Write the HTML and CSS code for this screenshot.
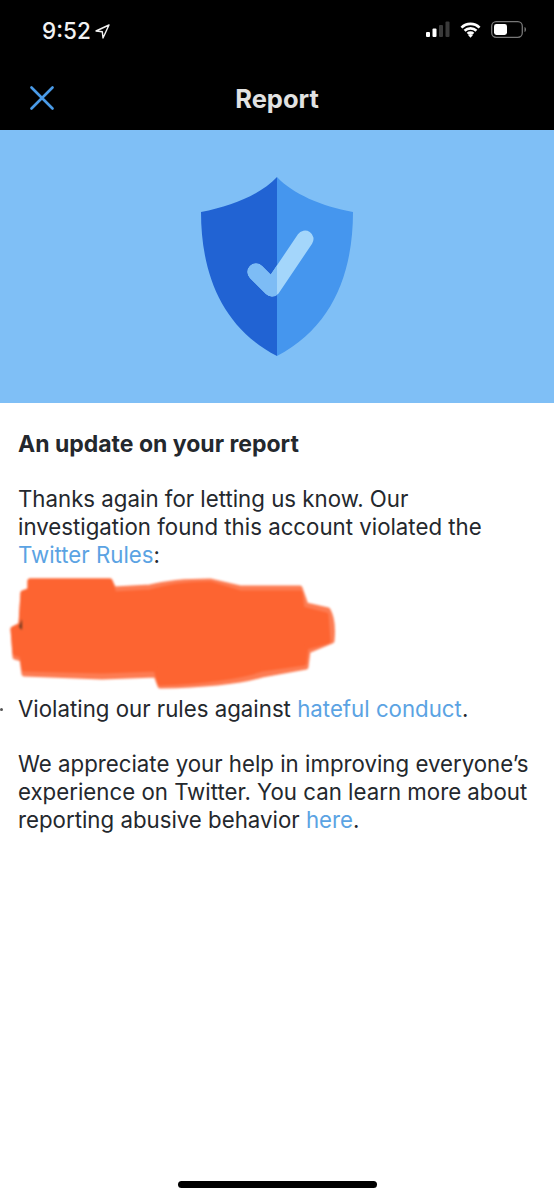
FILE: index.html
```html
<!DOCTYPE html>
<html lang="en">
<head>
<meta charset="utf-8">
<title>Report</title>
<link rel="stylesheet" href="styles.css">
</head>
<body>
<div class="phone">
  <header class="top">
    <div class="status">
      <div class="clock"><span>9:52</span>
        <svg class="loc" width="15" height="15" viewBox="0 0 15 15"><path d="M14 1 1 7 7.300 7.700 8 14Z" fill="none" stroke="#f2f2f2" stroke-width="1.400" stroke-linejoin="round"/></svg>
      </div>
      <div class="sys">
        <svg width="24" height="17" viewBox="0 0 24 17"><rect x="0" y="11" width="4" height="5" rx="1" fill="#fff"/><rect x="6.500" y="7.500" width="4" height="8.500" rx="1" fill="#fff"/><rect x="13" y="4" width="4" height="12" rx="1" fill="#3a3a3a"/><rect x="19.500" y="0.500" width="4" height="15.500" rx="1" fill="#3a3a3a"/></svg>
        <svg width="21" height="16" viewBox="0 0 22 16"><path d="M1.500 5.500a13.500 13.500 0 0 1 19 0M4.800 8.800a9 9 0 0 1 12.400 0M8 12a4.400 4.400 0 0 1 6 0" fill="none" stroke="#fff" stroke-width="2.800"/><path d="M11 16 8.600 13.400a3.400 3.400 0 0 1 4.800 0Z" fill="#fff"/></svg>
        <svg width="36" height="17" viewBox="0 0 36 17"><rect x="0.700" y="0.700" width="30.600" height="15.600" rx="4.500" fill="none" stroke="#777" stroke-width="1.300"/><rect x="3" y="3" width="13" height="11" rx="2.400" fill="#fff"/><path d="M33.500 6v5c1-.3 1.500-1.300 1.500-2.500s-.5-2.200-1.500-2.500Z" fill="#777"/></svg>
      </div>
    </div>
    <nav class="nav">
      <svg class="close" width="24" height="24" viewBox="0 0 24 24"><path d="M1.500 1.500 22.500 22.500M22.500 1.500 1.500 22.500" stroke="#4a9be8" stroke-width="2.600" stroke-linecap="round"/></svg>
      <h1 class="title">Report</h1>
    </nav>
  </header>
  <section class="banner">
    <svg width="152" height="180" viewBox="0 0 152 180">
      <defs><clipPath id="left-half"><rect x="0" y="0" width="76" height="180"/></clipPath></defs>
      <path d="M76 0C60 17 32 29 0 35C0 95 20 150 76 179Z" fill="#2163d3"/>
      <path d="M76 0C92 17 120 29 152 35C152 95 132 150 76 179Z" fill="#4596ee"/>
      <path d="M55 95 71 111 104 62" fill="none" stroke="#a4d6fb" stroke-width="17" stroke-linecap="round" stroke-linejoin="round"/>
      <path d="M55 95 71 111 104 62" fill="none" stroke="#7dbcf5" stroke-width="17" stroke-linecap="round" stroke-linejoin="round" clip-path="url(#left-half)"/>
    </svg>
  </section>
  <main class="body">
    <h2 class="heading">An update on your report</h2>
    <p class="para">Thanks again for letting us know. Our investigation found this account violated the <a class="link">Twitter Rules</a>:</p>
    <svg class="scribble" width="326" height="115" viewBox="0 0 326 115">
      <path d="M20 6H100L104 14 140 12C155 8 170 6 200 6L230 13H290L296 30 318 35Q324 45 322 66L298 76 296 92 252 100C235 105 205 110 150 111L146 100 92 102 14 99 12 84 5 82 3 54 11 50 13 18 20 15Z" fill="#fd7c52" stroke="#fd7c52" stroke-width="5" stroke-linejoin="round"/>
      <path d="M20 6H100L104 19 140 17C155 13 170 9 200 9L230 18H290L292 34 316 40 318 66 296 72 294 88 252 94C235 100 200 106 150 108L146 94 92 96 14 94 12 80 5 78 3 54 11 50 13 18 20 16Z" fill="#fd6431" stroke="#fd6431" stroke-width="5" stroke-linejoin="round"/>
      <path d="M12 44 9 52 12 55Z" fill="#6b3a22"/>
    </svg>
    <p class="para bullet">Violating our rules against <a class="link">hateful conduct</a>.</p>
    <p class="para spaced">We appreciate your help in improving everyone’s experience on Twitter. You can learn more about reporting abusive behavior <a class="link">here</a>.</p>
  </main>
  <div class="home"></div>
</div>
</body>
</html>
```

FILE: styles.css
```css
* { box-sizing: border-box; }
html, body { margin: 0; padding: 0; }
body { background: #fff; font-family: Inter, "Liberation Sans", sans-serif; }
.phone { width: 554px; height: 1200px; display: flex; flex-direction: column; overflow: hidden; position: relative; }
.top { background: #000; height: 130px; }
.status { height: 60px; padding: 21px 27px 0 42px; display: flex; justify-content: space-between; align-items: flex-start; }
.clock { display: flex; align-items: center; gap: 4px; color: #f2f2f2; font-size: 22.500px; line-height: 20px; font-weight: 500; }
.sys { display: flex; align-items: center; gap: 10px; }
.nav { height: 70px; position: relative; display: flex; align-items: center; justify-content: center; }
.close { position: absolute; left: 30px; top: 26px; }
.title { margin: 7px 0 0; color: #e2e2e2; font-size: 25.500px; font-weight: 700; line-height: 36px; }
.banner { height: 273px; background: #7fbff6; display: flex; justify-content: center; padding-top: 47px; }
.body { flex: 1; padding: 27px 18px 0; color: #24282d; font-size: 22.250px; line-height: 28px; }
.heading { margin: 0 0 27px; font-size: 23px; line-height: 28px; font-weight: 700; }
.para { margin: 0; }
.link { color: #5ba3e3; }
.scribble { display: block; margin: 6px 0 5px -8px; filter: blur(1px); }
.bullet { position: relative; }
.bullet::before { content: ""; position: absolute; left: -18px; top: 13px; width: 3px; height: 3px; border-radius: 50%; background: #555; }
.spaced { margin-top: 27px; }
.home { position: absolute; left: 178px; top: 1181px; width: 199px; height: 7px; border-radius: 4px; background: #000; }
```
